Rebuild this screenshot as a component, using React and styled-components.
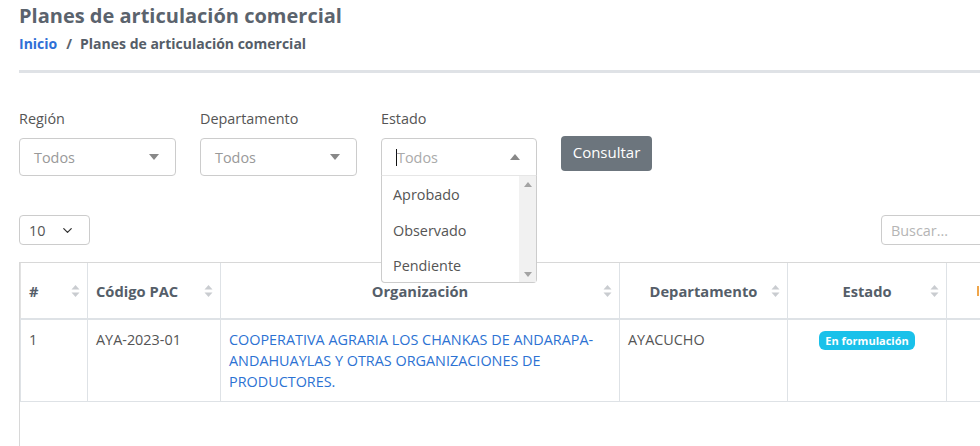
import styled, { createGlobalStyle } from "styled-components";
import { ChevronDown } from "lucide-react";

const GlobalStyle = createGlobalStyle`
  html, body {
    margin: 0;
    padding: 0;
    overflow: hidden;
    background: #fff;
    font-family: "Open Sans", "Liberation Sans", sans-serif;
  }
`;

const SortIcon = () => (
  <svg width="9" height="13" viewBox="0 0 9 13">
    <path d="M4.5 0.5 L8.5 5 L0.5 5 Z" fill="#c9ccd0" />
    <path d="M0.5 8 L8.5 8 L4.5 12.5 Z" fill="#c9ccd0" />
  </svg>
);

const Caret = ({ up }) => (
  <svg width="10" height="6" viewBox="0 0 10 6">
    {up ? (
      <path d="M0 6 L5 0 L10 6 Z" fill="#888" />
    ) : (
      <path d="M0 0 L10 0 L5 6 Z" fill="#888" />
    )}
  </svg>
);

const filters = [
  { label: "Región" },
  { label: "Departamento" },
];

const options = ["Aprobado", "Observado", "Pendiente"];

const columns = [
  { name: "#", width: 67 },
  { name: "Código PAC", width: 133 },
  { name: "Organización", width: 399, center: true },
  { name: "Departamento", width: 168, center: true },
  { name: "Estado", width: 159, center: true },
  { name: "", width: 173, extra: true },
];

const App = () => {
  return (
    <Page>
      <GlobalStyle />
      <Title>Planes de articulación comercial</Title>
      <Breadcrumb>
        <Crumb>Inicio</Crumb>
        <Separator>/</Separator>
        <Current>Planes de articulación comercial</Current>
      </Breadcrumb>
      <Divider />

      <FilterRow>
        {filters.map((f) => (
          <Field key={f.label}>
            <Label>{f.label}</Label>
            <Select>
              <Placeholder>Todos</Placeholder>
              <Caret />
            </Select>
          </Field>
        ))}
        <Field>
          <Label>Estado</Label>
          <Select open $w={156}>
            <Placeholder light>
              <TextCursor />
              Todos
            </Placeholder>
            <Caret up />
          </Select>
          <Dropdown>
            <OptionList>
              {options.map((o) => (
                <Option key={o}>{o}</Option>
              ))}
            </OptionList>
            <ScrollTrack>
              <svg width="8" height="5" viewBox="0 0 8 5">
                <path d="M0 5 L4 0 L8 5 Z" fill="#a3a3a3" />
              </svg>
              <svg width="8" height="5" viewBox="0 0 8 5">
                <path d="M0 0 L8 0 L4 5 Z" fill="#a3a3a3" />
              </svg>
            </ScrollTrack>
          </Dropdown>
        </Field>
        <Button>Consultar</Button>
      </FilterRow>

      <ToolRow>
        <LengthSelect>
          <span>10</span>
          <ChevronDown size={15} strokeWidth={2} color="#333" />
        </LengthSelect>
        <Search placeholder="Buscar..." />
      </ToolRow>

      <TableWrap>
        <Table>
          <colgroup>
            {columns.map((c, i) => (
              <col key={i} style={{ width: c.width }} />
            ))}
          </colgroup>
          <thead>
            <tr>
              {columns.map((c, i) => (
                <Th key={i} $center={c.center}>
                  {c.extra ? (
                    <OrangeMark />
                  ) : (
                    <>
                      {c.name}
                      <SortSlot>
                        <SortIcon />
                      </SortSlot>
                    </>
                  )}
                </Th>
              ))}
            </tr>
          </thead>
          <tbody>
            <tr>
              <Td>1</Td>
              <Td>AYA-2023-01</Td>
              <Td>
                <Link>
                  COOPERATIVA AGRARIA LOS CHANKAS DE ANDARAPA-ANDAHUAYLAS Y
                  OTRAS ORGANIZACIONES DE PRODUCTORES.
                </Link>
              </Td>
              <Td>AYACUCHO</Td>
              <Td $center>
                <Badge>En formulación</Badge>
              </Td>
              <Td />
            </tr>
          </tbody>
        </Table>
      </TableWrap>
    </Page>
  );
};

const Page = styled.div`
  padding: 4px 0 0 19px;
  width: 1100px;
`;

const Title = styled.h1`
  margin: 0;
  font-size: 20px;
  line-height: 24px;
  font-weight: 700;
  color: #5b636d;
`;

const Breadcrumb = styled.div`
  margin-top: 6px;
  display: flex;
  align-items: center;
  font-size: 14px;
  line-height: 20px;
  font-weight: 700;
`;

const Crumb = styled.span`
  color: #2f6fd6;
`;

const Separator = styled.span`
  color: #5b636d;
  margin: 0 8px 0 9px;
`;

const Current = styled.span`
  color: #555d68;
`;

const Divider = styled.div`
  margin-top: 16px;
  height: 3px;
  background: #dfe2e6;
`;

const FilterRow = styled.div`
  margin-top: 36px;
  display: flex;
  gap: 24px;
  align-items: flex-start;
`;

const Field = styled.div`
  position: relative;
  display: flex;
  flex-direction: column;
`;

const Label = styled.label`
  font-size: 14.4px;
  line-height: 20px;
  color: #555;
  margin-bottom: 9px;
`;

const Select = styled.div`
  box-sizing: border-box;
  width: ${(p) => p.$w || 157}px;
  height: 38px;
  border: 1px solid #ccc;
  border-radius: ${(p) => (p.open ? "4px 4px 0 0" : "4px")};
  display: flex;
  align-items: center;
  justify-content: space-between;
  padding: 0 16px 0 14px;
  background: #fff;
`;

const Placeholder = styled.span`
  display: flex;
  align-items: center;
  font-size: 14.4px;
  color: ${(p) => (p.light ? "#aaa" : "#999")};
`;

const TextCursor = styled.span`
  display: inline-block;
  width: 1px;
  height: 17px;
  background: #111;
`;

const Dropdown = styled.div`
  position: absolute;
  top: 66px;
  left: 0;
  box-sizing: border-box;
  width: 156px;
  height: 108px;
  border: 1px solid #ccc;
  border-top-color: #e6e6e6;
  border-radius: 0 0 4px 4px;
  background: #fff;
  display: flex;
  z-index: 5;
`;

const OptionList = styled.div`
  flex: 1;
  padding-top: 1px;
`;

const Option = styled.div`
  height: 35.5px;
  line-height: 35.5px;
  padding-left: 11px;
  font-size: 14.4px;
  color: #555;
`;

const ScrollTrack = styled.div`
  width: 17px;
  background: #f1f1f1;
  display: flex;
  flex-direction: column;
  justify-content: space-between;
  align-items: center;
  padding: 6px 0 5px;
`;

const Button = styled.button`
  margin-top: 27px;
  height: 35px;
  width: 91px;
  border: none;
  border-radius: 4px;
  background: #6c757d;
  color: #fff;
  font-family: "Open Sans", "Liberation Sans", sans-serif;
  font-size: 15px;
  padding: 0 0 3px;
`;

const ToolRow = styled.div`
  margin-top: 39px;
  display: flex;
  justify-content: space-between;
`;

const LengthSelect = styled.div`
  box-sizing: border-box;
  width: 71px;
  height: 30px;
  border: 1px solid #ccc;
  border-radius: 4px;
  display: flex;
  align-items: center;
  justify-content: space-between;
  padding: 0 14px 0 9px;
  font-size: 14.4px;
  color: #555;
`;

const Search = styled.input`
  box-sizing: border-box;
  width: 238px;
  height: 30px;
  border: 1px solid #ccc;
  border-radius: 4px;
  padding: 0 9px;
  font-family: "Open Sans", "Liberation Sans", sans-serif;
  font-size: 14.4px;
  &::placeholder {
    color: #b5b5b5;
  }
`;

const TableWrap = styled.div`
  margin-top: 17px;
  height: 200px;
  border-left: 1px solid #d8d8d8;
  border-top: 1px solid #d8d8d8;
`;

const Table = styled.table`
  width: 1099px;
  table-layout: fixed;
  border-collapse: collapse;
  font-size: 14.4px;
  color: #555;
`;

const Th = styled.th`
  position: relative;
  height: 55px;
  padding: ${(p) => (p.$center ? "0 16px" : "0 24px 0 8px")};
  border-left: 1px solid #dee2e6;
  border-bottom: 2px solid #dee2e6;
  font-size: 14.7px;
  font-weight: 700;
  color: #555e69;
  text-align: ${(p) => (p.$center ? "center" : "left")};
  &:first-child {
    border-left: 1px solid #e2e2e2;
  }
`;

const SortSlot = styled.span`
  position: absolute;
  right: 7px;
  top: 50%;
  transform: translateY(-50%);
  display: flex;
`;

const OrangeMark = styled.span`
  display: block;
  margin-left: 22px;
  width: 6px;
  height: 10px;
  border-left: 2px solid #f0a64a;
`;

const Td = styled.td`
  padding: 9px 8px;
  line-height: 21px;
  vertical-align: top;
  border-left: 1px solid #dee2e6;
  border-bottom: 1px solid #dee2e6;
  height: 63px;
  text-align: ${(p) => (p.$center ? "center" : "left")};
`;

const Link = styled.span`
  color: #2c72d3;
`;

const Badge = styled.span`
  display: inline-block;
  margin-top: 2px;
  padding: 0 6px;
  height: 19px;
  line-height: 19px;
  border-radius: 6px;
  background: #1ac1ea;
  color: #fff;
  font-size: 11px;
  font-weight: 700;
  vertical-align: top;
`;

export default App;
